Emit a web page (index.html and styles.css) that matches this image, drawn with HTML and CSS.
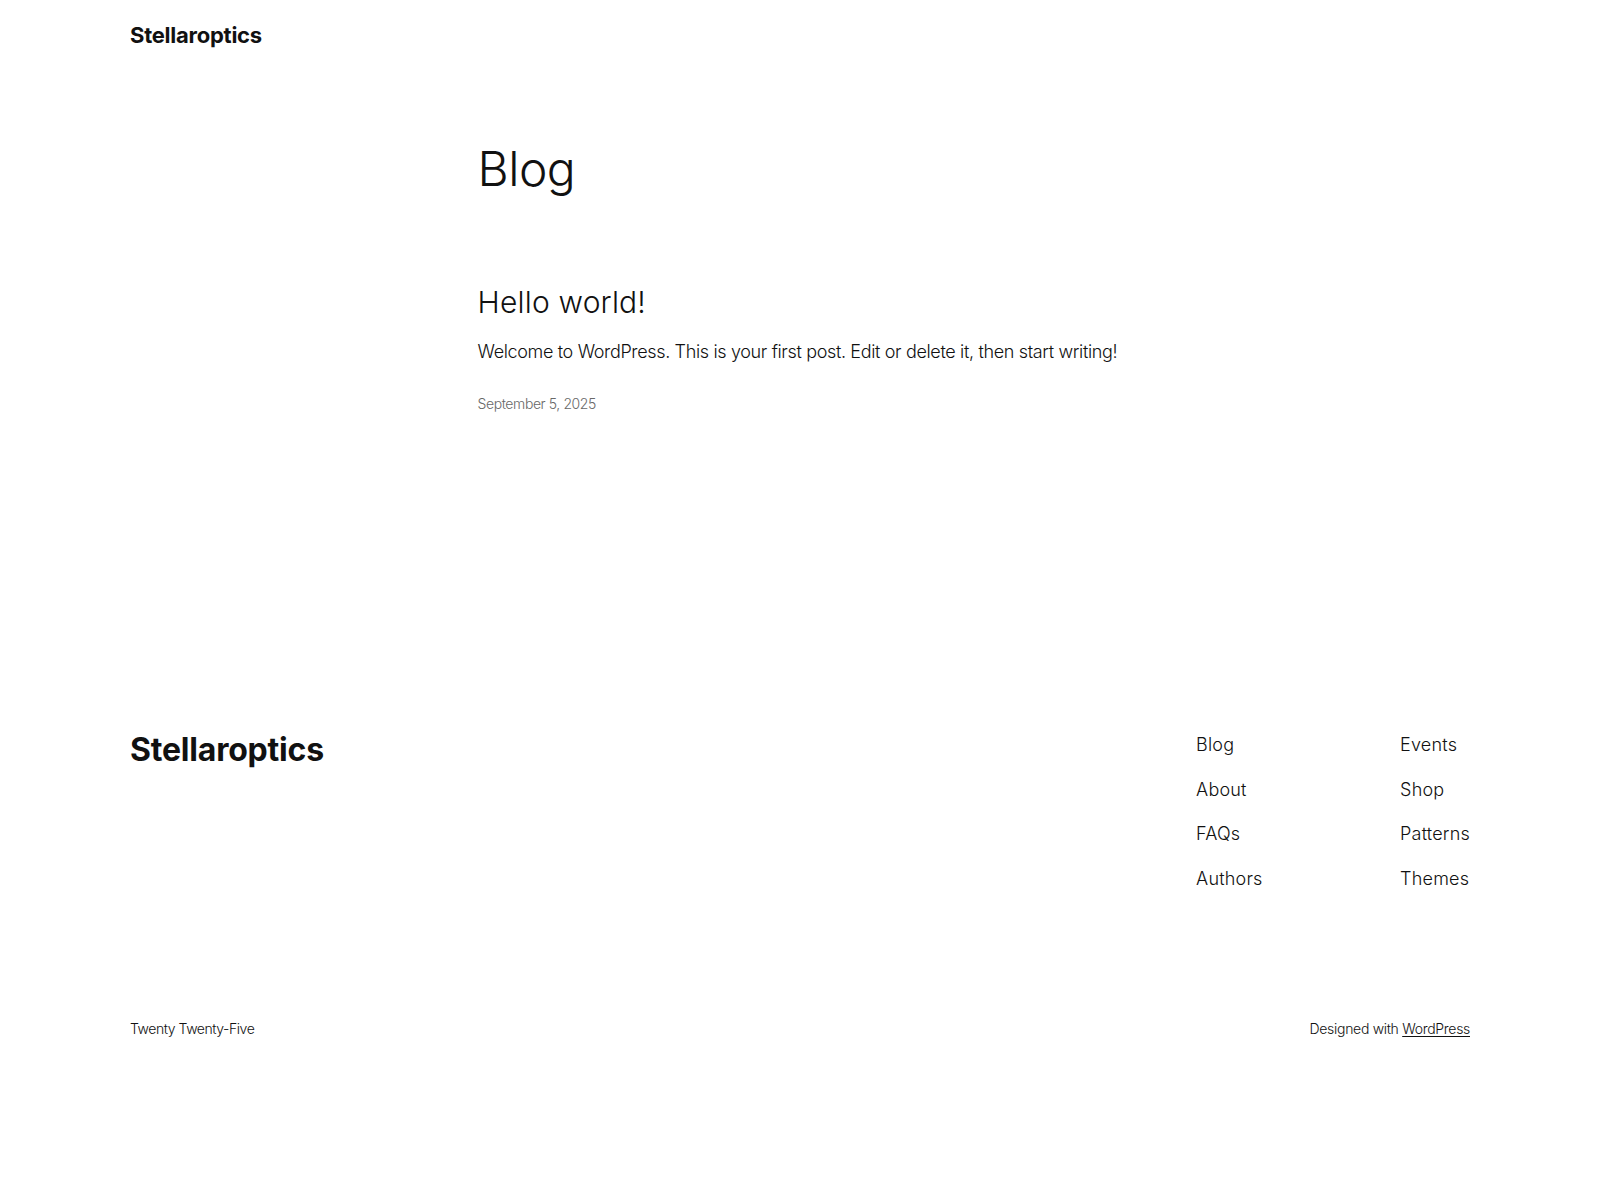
FILE: index.html
```html
<!DOCTYPE html>
<html lang="en">
<head>
<meta charset="utf-8">
<title>Blog – Stellaroptics</title>
<link rel="stylesheet" href="styles.css">
</head>
<body>
<header class="site-header">
  <div class="wide">
    <a class="site-title" href="#">Stellaroptics</a>
  </div>
</header>
<main class="site-main">
  <div class="content">
    <h1 class="page-title">Blog</h1>
    <article class="post">
      <h2 class="post-title"><a href="#">Hello world!</a></h2>
      <p class="post-excerpt">Welcome to WordPress. This is your first post. Edit or delete it, then start writing!</p>
      <time class="post-date">September 5, 2025</time>
    </article>
  </div>
</main>
<footer class="site-footer">
  <div class="wide">
    <div class="footer-top">
      <a class="footer-title" href="#">Stellaroptics</a>
      <div class="footer-navs">
        <nav class="footer-nav">
          <a href="#">Blog</a>
          <a href="#">About</a>
          <a href="#">FAQs</a>
          <a href="#">Authors</a>
        </nav>
        <nav class="footer-nav">
          <a href="#">Events</a>
          <a href="#">Shop</a>
          <a href="#">Patterns</a>
          <a href="#">Themes</a>
        </nav>
      </div>
    </div>
    <div class="footer-bottom">
      <span class="credit-left">Twenty Twenty-Five</span>
      <span class="credit-right">Designed with <a href="#" class="wp-link">WordPress</a></span>
    </div>
  </div>
</footer>
</body>
</html>
```
FILE: styles.css
```css
html, body {
  margin: 0;
  padding: 0;
  background: #ffffff;
}
body {
  font-family: "Inter", "Noto Sans", sans-serif;
  color: #111111;
  font-weight: 300;
  -webkit-font-smoothing: antialiased;
}
a {
  color: inherit;
  text-decoration: none;
}
.wide {
  width: 1340px;
  margin: 0 auto;
}
.site-header .wide {
  height: 70px;
  display: flex;
  align-items: center;
}
.site-title {
  font-size: 22px;
  font-weight: 700;
  letter-spacing: -0.25px;
}
.site-main {
  padding-top: 70px;
  min-height: 591px;
}
.content {
  width: 645px;
  margin: 0 auto;
}
.page-title {
  margin: 0;
  font-size: 48px;
  font-weight: 300;
  line-height: 1.2;
  letter-spacing: -0.5px;
}
.post {
  margin-top: 86px;
}
.post-title {
  margin: 0;
  font-size: 30px;
  font-weight: 300;
  line-height: 1.2;
  letter-spacing: 0.2px;
}
.post-excerpt {
  margin: 18px 0 0;
  font-size: 18px;
  line-height: 1.6;
  letter-spacing: -0.35px;
  white-space: nowrap;
}
.post-date {
  display: block;
  margin-top: 28px;
  font-size: 14px;
  line-height: 1.4;
  color: #686868;
  letter-spacing: -0.4px;
}
.site-footer .wide {
  display: flex;
  flex-direction: column;
}
.footer-top {
  display: flex;
  justify-content: space-between;
  align-items: flex-start;
}
.footer-title {
  font-size: 32px;
  font-weight: 700;
  line-height: 1.2;
  letter-spacing: -0.2px;
}
.footer-navs {
  display: grid;
  grid-template-columns: 204px auto;
}
.footer-nav {
  display: flex;
  flex-direction: column;
  gap: 17.5px;
}
.footer-nav a {
  font-size: 18px;
  line-height: 27px;
  letter-spacing: 0.2px;
}
.footer-bottom {
  display: flex;
  justify-content: space-between;
  margin-top: 127px;
  font-size: 14px;
  line-height: 1.4;
}
.credit-left {
  letter-spacing: -0.45px;
}
.credit-right {
  letter-spacing: -0.3px;
}
.wp-link {
  text-decoration: underline;
  text-underline-offset: 2px;
}
```
